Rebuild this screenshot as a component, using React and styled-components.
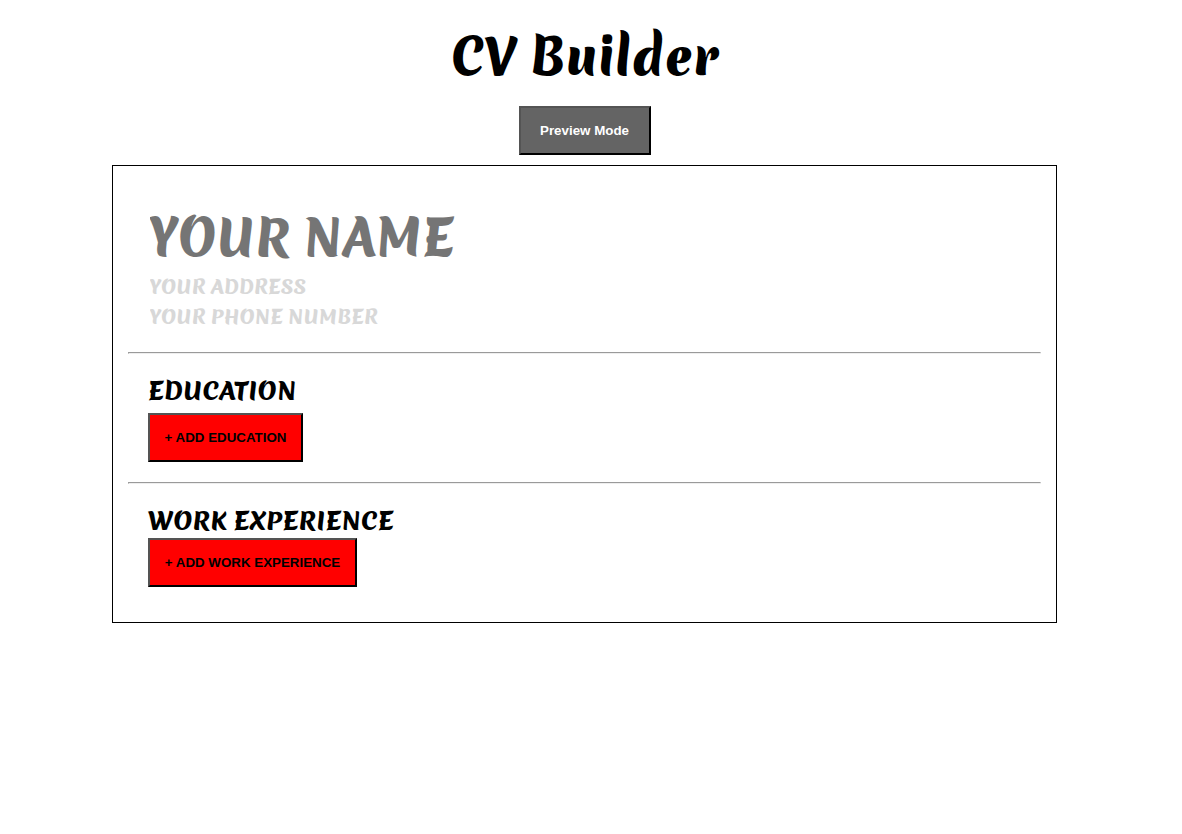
import React from "react";
import styled, { createGlobalStyle } from "styled-components";

const GlobalStyle = createGlobalStyle`
  *, *::before, *::after {
    box-sizing: border-box;
  }
  body {
    margin: 0;
    background: #fff;
    color: #000;
    font-family: Merienda, Lato, "Liberation Sans", sans-serif;
  }
`;

const Page = styled.main`
  display: flex;
  flex-direction: column;
  align-items: center;
  padding: 20px 125px 20px 112px;
`;

const Title = styled.h1`
  margin: 0 0 12px;
  font-size: 48px;
  font-weight: 900;
  line-height: 74px;
`;

const Button = styled.button`
  min-width: ${({ $width }) => $width}px;
  height: 49px;
  padding: 0 12px;
  border: 2px outset #000;
  background: ${({ $primary }) => ($primary ? "#646464" : "#f00")};
  color: ${({ $primary }) => ($primary ? "#fff" : "#000")};
  font-family: "Liberation Sans", Arial, sans-serif;
  font-weight: 700;
  white-space: nowrap;
  cursor: pointer;
`;

const Sheet = styled.form`
  width: 100%;
  margin-top: 10px;
  padding: 15px;
  border: 1px solid #000;
`;

const Block = styled.section`
  display: flex;
  flex-direction: column;
  align-items: flex-start;
  padding: 20px;
`;

const Field = styled.input`
  width: 100%;
  height: ${({ $large }) => ($large ? 71 : 30)}px;
  padding: ${({ $large }) => ($large ? "2px 2px 0" : "0 2px 2px")};
  border: 0;
  background: transparent;
  color: #000;
  font-family: inherit;
  font-size: ${({ $large }) => ($large ? 48 : 19)}px;
  font-weight: 900;

  &::placeholder {
    color: ${({ $large }) => ($large ? "#757575" : "#d8d8d8")};
    opacity: 1;
  }
`;

const Heading = styled.h2`
  margin: 0 0 ${({ $gap }) => $gap || 0}px;
  font-size: 24px;
  font-weight: 900;
  line-height: 34px;
`;

const Divider = styled.hr`
  width: 100%;
  margin: 0;
  border: 1px solid;
  border-color: #9a9a9a #eee #eee #9a9a9a;
`;

export default function App() {
  return (
    <>
      <GlobalStyle />
      <Page>
        <Title>CV Builder</Title>
        <Button type="button" $primary $width={132}>Preview Mode</Button>
        <Sheet>
          <Block>
            <Field $large type="text" aria-label="Your name" placeholder="YOUR NAME" />
            <Field type="text" aria-label="Your address" placeholder="YOUR ADDRESS" />
            <Field type="tel" aria-label="Your phone number" placeholder="YOUR PHONE NUMBER" />
          </Block>
          <Divider />
          <Block>
            <Heading $gap={5}>EDUCATION</Heading>
            <Button type="button" $width={155}>+ ADD EDUCATION</Button>
          </Block>
          <Divider />
          <Block>
            <Heading>WORK EXPERIENCE</Heading>
            <Button type="button" $width={209}>+ ADD WORK EXPERIENCE</Button>
          </Block>
        </Sheet>
      </Page>
    </>
  );
}
